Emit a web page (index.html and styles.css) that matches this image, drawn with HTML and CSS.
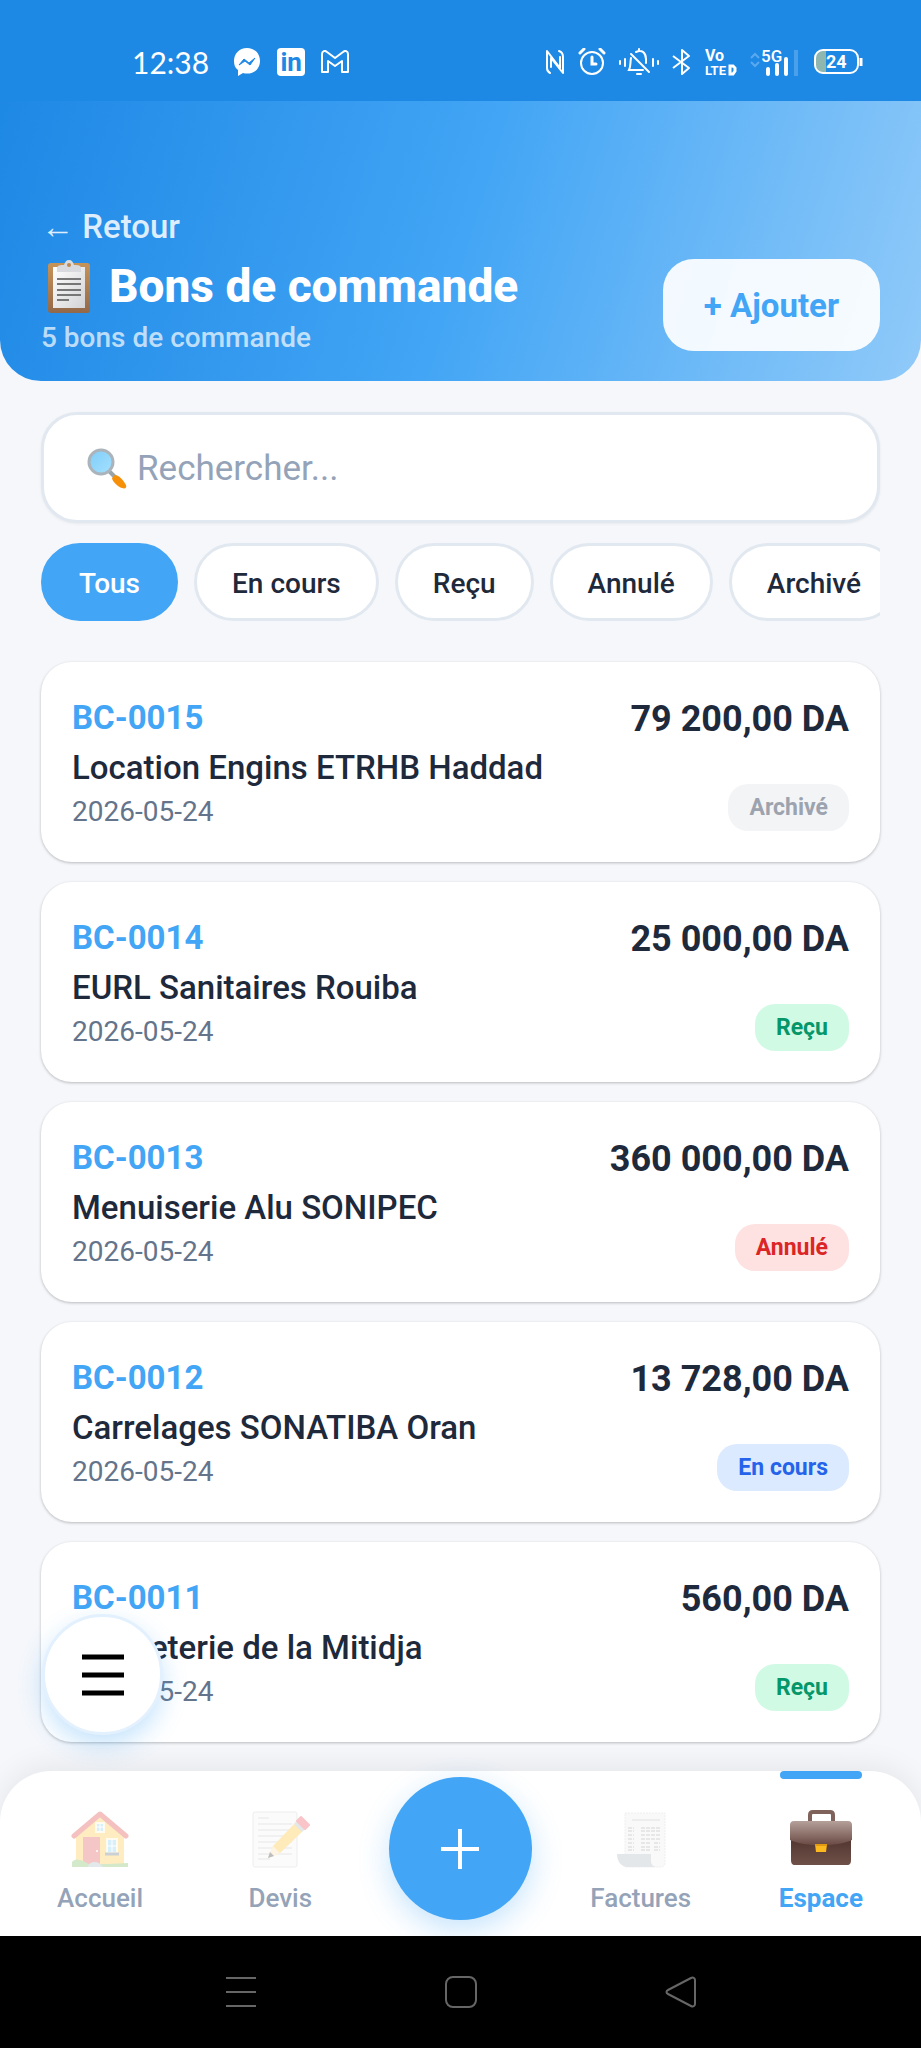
FILE: index.html
```html
<!DOCTYPE html>
<html lang="fr">
<head>
    <meta charset="UTF-8">
    <meta name="viewport" content="width=device-width, initial-scale=1.0">
    <title>Bons de commande</title>
    <link rel="stylesheet" href="styles.css">
</head>
<body>
    <div class="status-bar">
        <div class="status-left">
            <span class="clock">12:38</span>
            <svg width="28" height="28" viewBox="0 0 28 28">
                <path d="M14 0C6 0 1 6 1 13c0 4 1 7 4 9v6l5-3c1 .4 3 .6 4 .6 8 0 13-5.600 13-12.600S22 0 14 0z" fill="#fff"/>
                <path d="M6 17l5-6 5 4 6-5-5 7-5-4z" fill="#1e88e5" stroke="#1e88e5" stroke-linejoin="round"/>
            </svg>
            <span class="linkedin">in</span>
            <svg width="28" height="24" viewBox="0 0 28 24" fill="none" stroke="#fff" stroke-width="2" stroke-linejoin="round">
                <path d="M1 22V4c0-3 3-4 5-2l8 6 8-6c2-2 5-1 5 2v18h-6V11l-7 5-7-5v11z"/>
            </svg>
        </div>
        <div class="status-right">
            <svg width="20" height="26" viewBox="0 0 20 26" fill="none" stroke="#fff" stroke-width="2" stroke-linecap="round" stroke-linejoin="round">
                <path d="M5 24c-2-1-3-3-3-5V2l13 17V8"/>
                <path d="M14 2c3 1 4 3 4 6v16L6 9v9"/>
            </svg>
            <svg width="28" height="28" viewBox="0 0 28 28" fill="none" stroke="#fff" stroke-width="2" stroke-linecap="round">
                <circle cx="14" cy="15" r="11"/>
                <path d="M14 9v7h4M2 5l4-4M22 1l4 4" stroke-width="3"/>
            </svg>
            <svg width="40" height="28" viewBox="0 0 40 28" fill="none" stroke="#fff" stroke-width="2" stroke-linecap="round">
                <path d="M1 13v3M6 11v7M34 11v7M39 13v3" stroke-width="2"/>
                <path d="M17 4c6-3 10 1 10 7v4M12 10c-1 5 0 8-2 12h14M12 6l18 18M20 1v2M18 26h4"/>
            </svg>
            <svg width="20" height="28" viewBox="0 0 20 28" fill="none" stroke="#fff" stroke-width="2" stroke-linejoin="round">
                <path d="M1 8l16 12-7 6V2l7 6L1 20"/>
            </svg>
            <svg width="32" height="40" viewBox="0 -6 32 40">
                <text x="0" y="13" font-size="16">Vo</text>
                <text x="0" y="27" font-size="13">LTE</text>
                <path d="M25 18h3l2 2v3l-2 3h-3z" fill="none" stroke="#fff" stroke-width="3"/>
            </svg>
            <svg width="50" height="40" viewBox="0 -6 50 40">
                <path d="M1 10l4-4 4 4M1 14l4 4 4-4" fill="none" stroke="#5aa8ee" stroke-width="2"/>
                <text class="network" x="11" y="14" font-size="17">5G</text>
                <path d="M18 26v-5M27 26v-9M36 26V11" stroke="#fff" stroke-width="4" stroke-linecap="round"/>
                <path d="M46 28V2" stroke="#4ba0eb" stroke-width="4"/>
            </svg>
            <svg width="50" height="28" viewBox="0 0 50 28">
                <path d="M9 3h4v21H9c-4 0-6-2-6-6V9c0-4 2-6 6-6z" fill="#8fb7b0"/>
                <rect x="2" y="2" width="43" height="23" rx="8" fill="none" stroke="#fff" stroke-width="2"/>
                <path d="M48 10v8" stroke="#fff" stroke-width="3"/>
                <text x="13" y="20" font-size="18">24</text>
            </svg>
        </div>
    </div>

    <header class="header">
        <div class="header-text">
            <a class="back" href="#">← Retour</a>
            <h1>
                <svg width="52" height="54" viewBox="0 0 52 54">
                    <defs>
                        <linearGradient id="board" x1="0" y1="0" x2="0" y2="1"><stop offset="0" stop-color="#c79457"/><stop offset="1" stop-color="#92684a"/></linearGradient>
                        <linearGradient id="paper" x1="0" y1="0" x2="1" y2="1"><stop offset="0" stop-color="#fff"/><stop offset="1" stop-color="#d3d3d6"/></linearGradient>
                    </defs>
                    <rect x="7" y="4" width="42" height="50" rx="3" fill="url(#board)"/>
                    <rect x="12" y="8" width="32" height="41" fill="url(#paper)"/>
                    <path d="M16 13V9c0-2 2-3 5-3h2c1-3 2-5 5-5s4 2 5 5h2c3 0 5 1 5 3v4z" fill="#d8dadd"/>
                    <circle cx="28" cy="6" r="2" fill="#c08850"/>
                    <path d="M16 20h24M16 25h24M16 31h24M16 36h24M16 41h12" stroke="#777" stroke-width="2"/>
                </svg>
                Bons de commande
            </h1>
            <p class="count">5 bons de commande</p>
        </div>
        <button class="add" type="button">+ Ajouter</button>
    </header>

    <main>
        <label class="search">
            <svg width="42" height="42" viewBox="0 0 42 42">
                <defs>
                    <linearGradient id="lens" x1="0" y1="0" x2="1" y2="1"><stop offset="0" stop-color="#7fcdf8"/><stop offset="1" stop-color="#a5e1ff"/></linearGradient>
                </defs>
                <path d="M24 24l6 6" stroke="#9aa5ab" stroke-width="4"/>
                <path d="M30 28c4 0 9 6 11 10 1 3-1 4-4 3-4-1-10-7-10-10z" fill="#f79009"/>
                <circle cx="16" cy="15" r="12" fill="url(#lens)" stroke="#aab4ba" stroke-width="3"/>
            </svg>
            <input type="search" placeholder="Rechercher..." aria-label="Rechercher">
        </label>

        <div class="filters">
            <button class="chip active" type="button">Tous</button>
            <button class="chip" type="button">En cours</button>
            <button class="chip" type="button">Reçu</button>
            <button class="chip" type="button">Annulé</button>
            <button class="chip" type="button">Archivé</button>
        </div>

        <ul class="orders">
            <li class="order">
                <div>
                    <p class="number">BC-0015</p>
                    <p class="supplier">Location Engins ETRHB Haddad</p>
                    <p class="date">2026-05-24</p>
                </div>
                <div class="order-side">
                    <span class="amount">79 200,00 DA</span>
                    <span class="badge archive">Archivé</span>
                </div>
            </li>
            <li class="order">
                <div>
                    <p class="number">BC-0014</p>
                    <p class="supplier">EURL Sanitaires Rouiba</p>
                    <p class="date">2026-05-24</p>
                </div>
                <div class="order-side">
                    <span class="amount">25 000,00 DA</span>
                    <span class="badge recu">Reçu</span>
                </div>
            </li>
            <li class="order">
                <div>
                    <p class="number">BC-0013</p>
                    <p class="supplier">Menuiserie Alu SONIPEC</p>
                    <p class="date">2026-05-24</p>
                </div>
                <div class="order-side">
                    <span class="amount">360 000,00 DA</span>
                    <span class="badge annule">Annulé</span>
                </div>
            </li>
            <li class="order">
                <div>
                    <p class="number">BC-0012</p>
                    <p class="supplier">Carrelages SONATIBA Oran</p>
                    <p class="date">2026-05-24</p>
                </div>
                <div class="order-side">
                    <span class="amount">13 728,00 DA</span>
                    <span class="badge en-cours">En cours</span>
                </div>
            </li>
            <li class="order">
                <div>
                    <p class="number">BC-0011</p>
                    <p class="supplier">Briqueterie de la Mitidja</p>
                    <p class="date">2026-05-24</p>
                </div>
                <div class="order-side">
                    <span class="amount">560,00 DA</span>
                    <span class="badge recu">Reçu</span>
                </div>
            </li>
        </ul>

        <!-- Menu flottant par-dessus la liste -->
        <button class="menu-button" type="button" aria-label="Menu">
            <svg width="42" height="42" viewBox="0 0 42 42" stroke="#000" stroke-width="5">
                <path d="M0 3h42M0 21h42M0 39h42"/>
            </svg>
        </button>
    </main>

    <nav class="tabs">
        <a class="tab" href="#">
            <svg width="60" height="60" viewBox="0 0 60 60">
                <path d="M6 24L30 6l24 18v32H6z" fill="#ffca4f"/>
                <path d="M4 28L30 6l26 22" fill="none" stroke="#e0504c" stroke-width="5" stroke-linejoin="round" stroke-linecap="round"/>
                <rect x="13" y="29" width="17" height="27" fill="#e2605e"/>
                <circle cx="27" cy="43" r="1" fill="#fff"/>
                <path d="M26 15h8v9h-8zM37 31h10v14H37z" fill="#8ed3f5" stroke="#fff4d0" stroke-width="2"/>
                <path d="M30 15v9M26 19h8M42 31v14M37 38h10" stroke="#fff"/>
                <path d="M35 46h14" stroke="#6b7a87" stroke-width="3"/>
                <path d="M2 59v-5c4-4 8-2 11-1l6 3h20l19-1v4z" fill="#86bf6b"/>
                <path d="M18 59c0-5 10-8 15 0z" fill="#b0bec5"/>
            </svg>
            <span>Accueil</span>
        </a>
        <a class="tab" href="#">
            <svg width="60" height="60" viewBox="0 0 60 60">
                <rect x="3" y="4" width="44" height="55" rx="2" fill="#f4f4f4" stroke="#cfcfcf"/>
                <path d="M8 10h11M8 16h34M8 22h34M8 28h34M8 34h34M8 40h34M8 46h34M8 51h12" stroke="#bdbdbd"/>
                <path d="M23 38L47 13l8 8-25 24-12 5z" fill="#ffc83d"/>
                <path d="M23 38l7 7-12 5z" fill="#fae0b0"/>
                <path d="M20 44l4 4-6 2z" fill="#444"/>
                <path d="M44 16l4-4 8 8-4 4z" fill="#b0bec5"/>
                <path d="M47 13l4-4 8 8-4 4z" fill="#ee5b64" stroke="#ee5b64" stroke-width="2" stroke-linejoin="round"/>
            </svg>
            <span>Devis</span>
        </a>
        <div class="tab-center">
            <button class="create" type="button" aria-label="Créer">
                <svg width="38" height="40" viewBox="0 0 38 40" stroke="#fff" stroke-width="4">
                    <path d="M0 20h38M19 0v40"/>
                </svg>
            </button>
        </div>
        <a class="tab" href="#">
            <svg width="60" height="60" viewBox="0 0 60 60">
                <path d="M14 5h40v50c0 3-2 4-5 4H14z" fill="#efefef" stroke="#d5d5d5" stroke-dasharray="2 1"/>
                <path d="M21 12h28" stroke="#aaa"/>
                <path d="M17 20h6M30 20h19M17 23h6M30 23h19M17 27h6M30 27h19M17 31h6M30 31h19M17 35h6M30 35h9M43 35h6M17 39h6M30 39h9M43 39h6M17 42h6M30 42h9M43 42h6" stroke="#8b8b8b" stroke-dasharray="4 1"/>
                <path d="M6 46h34v7c0 4 3 6 7 6H17c-7 0-11-6-11-13z" fill="#b5bcc5"/>
            </svg>
            <span>Factures</span>
        </a>
        <a class="tab current" href="#">
            <svg width="64" height="60" viewBox="0 0 64 60">
                <defs>
                    <linearGradient id="flap" x1="0" y1="0" x2="0" y2="1"><stop offset="0" stop-color="#b5a09a"/><stop offset="1" stop-color="#6a4a43"/></linearGradient>
                    <linearGradient id="case" x1="0" y1="0" x2="0" y2="1"><stop offset="0" stop-color="#4e322c"/><stop offset="1" stop-color="#6f5149"/></linearGradient>
                </defs>
                <path d="M21 14V7c0-2 1-3 3-3h17c2 0 3 1 3 3v7" fill="none" stroke="#7f625a" stroke-width="4"/>
                <path d="M2 28h60v24c0 3-1 5-4 5H6c-3 0-4-2-4-5z" fill="url(#case)"/>
                <path d="M5 13h54c3 0 4 2 4 4v15c-15 7-47 7-62 0V17c0-2 1-4 4-4z" fill="url(#flap)"/>
                <path d="M26 36h12l-1 8H27z" fill="#fbb81f"/>
                <path d="M26 36h12v2H26z" fill="#e09a10"/>
            </svg>
            <span>Espace</span>
        </a>
    </nav>

    <div class="system-nav">
        <button type="button" aria-label="Applications récentes">
            <svg width="32" height="32" viewBox="0 0 32 32"><path d="M1 2h30M1 16h30M1 30h30"/></svg>
        </button>
        <button type="button" aria-label="Écran d'accueil">
            <svg width="32" height="32" viewBox="0 0 32 32"><rect x="1" y="1" width="30" height="30" rx="7"/></svg>
        </button>
        <button type="button" aria-label="Précédent">
            <svg width="32" height="32" viewBox="0 0 32 32"><path d="M3 14L26 2c2-1 4 0 4 2v24c0 2-2 3-4 2L3 18c-2-1-2-3 0-4z"/></svg>
        </button>
    </div>
</body>
</html>
```
FILE: styles.css
```css
* {
    box-sizing: border-box;
}
body {
    margin: 0;
    min-height: 100vh;
    display: flex;
    flex-direction: column;
    background-color: #f5f7fb;
    color: #1e293b;
    font-family: Roboto, "Liberation Sans", sans-serif;
}
h1, p, ul {
    margin: 0;
    padding: 0;
}
button {
    font-family: inherit;
    border: none;
    cursor: pointer;
}
a {
    text-decoration: none;
}
svg {
    flex-shrink: 0;
}

/* Barre d'état */
.status-bar {
    display: flex;
    justify-content: space-between;
    height: 101px;
    padding: 22px 58px 0 132px;
    background-color: #1e88e5;
    color: #fff;
}
.status-left, .status-right {
    display: flex;
    align-items: center;
    gap: 16px;
}
.status-right {
    gap: 13px;
}
.status-bar text {
    fill: #fff;
    font-weight: 700;
}
.status-bar .network {
    font-weight: 500;
}
.clock {
    margin-right: 8px;
    font-family: Lato, sans-serif;
    font-size: 30px;
}
.linkedin {
    width: 28px;
    height: 28px;
    border-radius: 4px;
    background-color: #fff;
    color: #1e88e5;
    font-size: 26px;
    font-weight: 700;
    line-height: 28px;
    text-align: center;
}

/* En-tête */
.header {
    display: flex;
    justify-content: space-between;
    align-items: flex-end;
    padding: 106px 41px 30px;
    border-radius: 0 0 41px 41px;
    background: linear-gradient(107deg, #1e88e5, #42a5f5 50%, #90caf9);
}
.back {
    display: block;
    color: rgba(255, 255, 255, 0.85);
    font-size: 33px;
    font-weight: 500;
    line-height: 40px;
}
h1 {
    display: flex;
    align-items: center;
    gap: 16px;
    color: #fff;
    font-size: 46px;
    font-weight: 800;
    line-height: 78px;
}
.count {
    color: rgba(255, 255, 255, 0.7);
    font-size: 28px;
    font-weight: 500;
    line-height: 26px;
}
.add {
    padding: 2px 41px 0;
    border-radius: 31px;
    background-color: rgba(255, 255, 255, 0.92);
    color: #42a5f5;
    font-size: 33px;
    font-weight: 700;
    line-height: 90px;
}

main {
    position: relative;
    flex: 1;
    padding: 31px 41px 29px;
}
.search {
    display: flex;
    align-items: center;
    gap: 10px;
    height: 111px;
    padding: 0 41px;
    border: 3px solid #e2e8f0;
    border-radius: 36px;
    background-color: #fff;
    box-shadow: 0 1px 3px rgba(0, 0, 0, 0.06);
}
.search input {
    flex: 1;
    min-width: 0;
    padding: 2px 0 0;
    border: none;
    outline: none;
    background: none;
    color: #1e293b;
    font-family: inherit;
    font-size: 35px;
}
.search input::placeholder {
    color: #94a3b8;
    opacity: 1;
}

/* Filtres */
.filters {
    display: flex;
    gap: 16px;
    margin-top: 20px;
    overflow: hidden;
}
.chip {
    flex-shrink: 0;
    height: 78px;
    padding: 2px 35px 0;
    border: 3px solid #e2e8f0;
    border-radius: 39px;
    background-color: #fff;
    color: #1e293b;
    font-size: 28px;
    font-weight: 500;
}
.chip.active {
    border-color: #42a5f5;
    background-color: #42a5f5;
    color: #fff;
}

/* Liste des bons */
.orders {
    display: flex;
    flex-direction: column;
    gap: 20px;
    margin-top: 41px;
    list-style: none;
}
.order {
    display: flex;
    justify-content: space-between;
    padding: 31px;
    border-radius: 31px;
    background-color: #fff;
    box-shadow: 0 1px 3px rgba(0, 0, 0, 0.25);
}
.number {
    color: #42a5f5;
    font-size: 33px;
    font-weight: 700;
    line-height: 50px;
}
.supplier {
    font-size: 33px;
    font-weight: 500;
    line-height: 50px;
}
.date {
    color: #64748b;
    font-size: 28px;
    line-height: 38px;
}
.order-side {
    display: flex;
    flex-direction: column;
    justify-content: space-between;
    align-items: flex-end;
}
.amount {
    font-size: 36px;
    font-weight: 700;
    line-height: 52px;
}
.badge {
    padding: 1px 21px 0;
    border-radius: 20px;
    font-size: 23px;
    font-weight: 700;
    line-height: 46px;
}
.archive {
    background-color: #f3f4f6;
    color: #9ca3af;
}
.recu {
    background-color: #d1fae5;
    color: #059669;
}
.annule {
    background-color: #fee2e2;
    color: #dc2626;
}
.en-cours {
    background-color: #dbeafe;
    color: #2563eb;
}

.menu-button {
    position: absolute;
    left: 42px;
    bottom: 36px;
    display: flex;
    align-items: center;
    justify-content: center;
    width: 121px;
    height: 121px;
    border: 3px solid #e3f0fd;
    border-radius: 50%;
    background-color: #fff;
    box-shadow: 0 10px 24px rgba(66, 165, 245, 0.3);
}

/* Navigation du bas */
.tabs {
    position: relative;
    display: grid;
    grid-template-columns: repeat(5, 1fr);
    height: 165px;
    padding: 0 10px;
    border-radius: 51px 51px 0 0;
    background-color: #fff;
    box-shadow: 0 -5px 30px rgba(0, 0, 0, 0.07);
}
.tab {
    display: flex;
    flex-direction: column;
    align-items: center;
    gap: 12px;
    padding-top: 37px;
    color: #94a3b8;
    font-size: 26px;
    font-weight: 500;
    line-height: 36px;
}
.tab svg {
    opacity: 0.35;
}
.tab.current {
    padding-top: 0;
    color: #42a5f5;
    font-weight: 700;
}
.tab.current::before {
    content: "";
    width: 82px;
    height: 8px;
    margin-bottom: 17px;
    border-radius: 4px;
    background-color: #42a5f5;
}
.tab.current svg {
    opacity: 1;
}
.tab-center {
    display: flex;
    justify-content: center;
    padding-top: 6px;
}
.create {
    display: flex;
    align-items: center;
    justify-content: center;
    width: 143px;
    height: 143px;
    border-radius: 50%;
    background-color: #42a5f5;
    box-shadow: 0 10px 30px rgba(66, 165, 245, 0.3);
}

.system-nav {
    position: relative;
    display: flex;
    justify-content: center;
    gap: 188px;
    height: 112px;
    background-color: #000;
}
.system-nav button {
    padding: 0;
    background: none;
}
.system-nav svg {
    display: block;
    fill: none;
    stroke: #666;
    stroke-width: 2;
}
```
